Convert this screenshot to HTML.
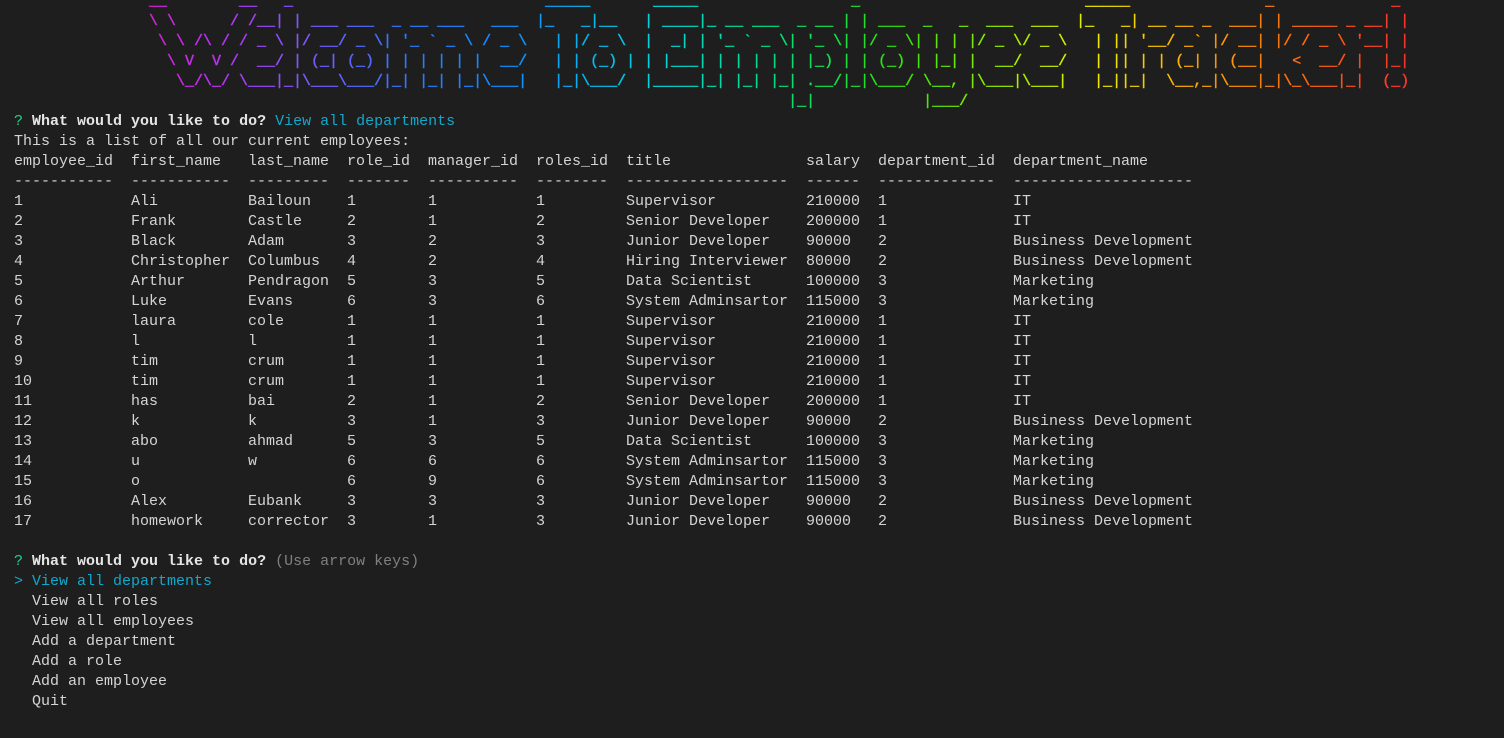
<!DOCTYPE html>
<html><head><meta charset="utf-8">
<style>
html,body{margin:0;padding:0;background:#1e1e1e;width:1504px;height:738px;overflow:hidden}
body{font-family:"Liberation Mono",monospace;font-size:15px;line-height:20px;color:#d4d4d4}
.wrap{position:absolute;left:14px;top:-8px}
pre{margin:0;font:inherit;line-height:20px;white-space:pre}
.banner{display:inline-block;background:linear-gradient(90deg,#ff0a78 0px,#c030f0 190px,#8058ff 290px,#2a7cff 400px,#1090ff 500px,#00d8e0 640px,#00e080 760px,#30e010 880px,#a8f000 1000px,#f0f000 1080px,#ffb000 1170px,#ff6a10 1290px,#ff3030 1400px);-webkit-background-clip:text;background-clip:text;color:transparent;-webkit-text-stroke:0.4px transparent}
.g{color:#23d18b}.b{font-weight:bold;color:#e5e5e5}.c{color:#11a8cd}.d{color:#808080}
table{border-collapse:collapse;table-layout:fixed}
td{padding:0;height:20px;white-space:pre;vertical-align:top}
</style></head><body>
<div class="wrap">
<pre class="banner">               __        __   _                            _____       _____                 _                         _____               _             _ 
               \ \      / /__| | ___ ___  _ __ ___   ___  |_   _|__   | ____|_ __ ___  _ __ | | ___  _   _  ___  ___  |_   _| __ __ _  ___| | _____ _ __| |
                \ \ /\ / / _ \ |/ __/ _ \| '_ ` _ \ / _ \   | |/ _ \  |  _| | '_ ` _ \| '_ \| |/ _ \| | | |/ _ \/ _ \   | || '__/ _` |/ __| |/ / _ \ '__| |
                 \ V  V /  __/ | (_| (_) | | | | | |  __/   | | (_) | | |___| | | | | | |_) | | (_) | |_| |  __/  __/   | || | | (_| | (__|   &lt;  __/ |  |_|
                  \_/\_/ \___|_|\___\___/|_| |_| |_|\___|   |_|\___/  |_____|_| |_| |_| .__/|_|\___/ \__, |\___|\___|   |_||_|  \__,_|\___|_|\_\___|_|  (_)
                                                                                      |_|            |___/                                                 </pre>
<pre><span class="g">?</span> <span class="b">What would you like to do?</span> <span class="c">View all departments</span>
This is a list of all our current employees:</pre>
<table>
<colgroup><col style="width:117px"><col style="width:117px"><col style="width:99px"><col style="width:81px"><col style="width:108px"><col style="width:90px"><col style="width:180px"><col style="width:72px"><col style="width:135px"><col style="width:200px"></colgroup>
<tr><td>employee_id</td><td>first_name</td><td>last_name</td><td>role_id</td><td>manager_id</td><td>roles_id</td><td>title</td><td>salary</td><td>department_id</td><td>department_name</td></tr>
<tr><td>-----------</td><td>-----------</td><td>---------</td><td>-------</td><td>----------</td><td>--------</td><td>------------------</td><td>------</td><td>-------------</td><td>--------------------</td></tr>
<tr><td>1</td><td>Ali</td><td>Bailoun</td><td>1</td><td>1</td><td>1</td><td>Supervisor</td><td>210000</td><td>1</td><td>IT</td></tr>
<tr><td>2</td><td>Frank</td><td>Castle</td><td>2</td><td>1</td><td>2</td><td>Senior Developer</td><td>200000</td><td>1</td><td>IT</td></tr>
<tr><td>3</td><td>Black</td><td>Adam</td><td>3</td><td>2</td><td>3</td><td>Junior Developer</td><td>90000</td><td>2</td><td>Business Development</td></tr>
<tr><td>4</td><td>Christopher</td><td>Columbus</td><td>4</td><td>2</td><td>4</td><td>Hiring Interviewer</td><td>80000</td><td>2</td><td>Business Development</td></tr>
<tr><td>5</td><td>Arthur</td><td>Pendragon</td><td>5</td><td>3</td><td>5</td><td>Data Scientist</td><td>100000</td><td>3</td><td>Marketing</td></tr>
<tr><td>6</td><td>Luke</td><td>Evans</td><td>6</td><td>3</td><td>6</td><td>System Adminsartor</td><td>115000</td><td>3</td><td>Marketing</td></tr>
<tr><td>7</td><td>laura</td><td>cole</td><td>1</td><td>1</td><td>1</td><td>Supervisor</td><td>210000</td><td>1</td><td>IT</td></tr>
<tr><td>8</td><td>l</td><td>l</td><td>1</td><td>1</td><td>1</td><td>Supervisor</td><td>210000</td><td>1</td><td>IT</td></tr>
<tr><td>9</td><td>tim</td><td>crum</td><td>1</td><td>1</td><td>1</td><td>Supervisor</td><td>210000</td><td>1</td><td>IT</td></tr>
<tr><td>10</td><td>tim</td><td>crum</td><td>1</td><td>1</td><td>1</td><td>Supervisor</td><td>210000</td><td>1</td><td>IT</td></tr>
<tr><td>11</td><td>has</td><td>bai</td><td>2</td><td>1</td><td>2</td><td>Senior Developer</td><td>200000</td><td>1</td><td>IT</td></tr>
<tr><td>12</td><td>k</td><td>k</td><td>3</td><td>1</td><td>3</td><td>Junior Developer</td><td>90000</td><td>2</td><td>Business Development</td></tr>
<tr><td>13</td><td>abo</td><td>ahmad</td><td>5</td><td>3</td><td>5</td><td>Data Scientist</td><td>100000</td><td>3</td><td>Marketing</td></tr>
<tr><td>14</td><td>u</td><td>w</td><td>6</td><td>6</td><td>6</td><td>System Adminsartor</td><td>115000</td><td>3</td><td>Marketing</td></tr>
<tr><td>15</td><td>o</td><td></td><td>6</td><td>9</td><td>6</td><td>System Adminsartor</td><td>115000</td><td>3</td><td>Marketing</td></tr>
<tr><td>16</td><td>Alex</td><td>Eubank</td><td>3</td><td>3</td><td>3</td><td>Junior Developer</td><td>90000</td><td>2</td><td>Business Development</td></tr>
<tr><td>17</td><td>homework</td><td>corrector</td><td>3</td><td>1</td><td>3</td><td>Junior Developer</td><td>90000</td><td>2</td><td>Business Development</td></tr>
</table>
<pre> 
<span class="g">?</span> <span class="b">What would you like to do?</span> <span class="d">(Use arrow keys)</span>
<span class="c">&gt; View all departments</span>
  View all roles
  View all employees
  Add a department
  Add a role
  Add an employee
  Quit</pre>
</div>
</body></html>
